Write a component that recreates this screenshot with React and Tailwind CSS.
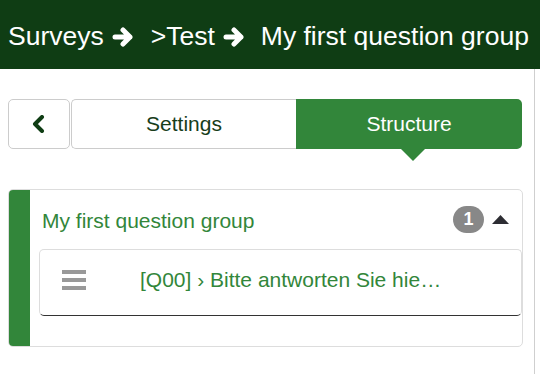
import React from "react";

const Arrow = () => (
  <svg width="23" height="20" viewBox="0 0 23 20" className="shrink-0">
    <path d="M3 10h15M11 3l7 7-7 7" fill="none" stroke="#fff" strokeWidth="5" strokeLinecap="round" strokeLinejoin="round" />
  </svg>
);

export default function App() {
  return (
    <div className="w-[540px] h-[374px] bg-white overflow-hidden font-['Liberation_Sans',Arial,sans-serif]">
      {/* breadcrumb header */}
      <div className="h-[69px] bg-[#0f3d14] flex items-center pl-2 pt-[4px] text-white text-[26.5px] whitespace-nowrap">
        <span>Surveys</span>
        <span className="ml-[8px] mr-[16px]"><Arrow /></span>
        <span>&gt;Test</span>
        <span className="ml-[8px] mr-[15px]"><Arrow /></span>
        <span>My first question group</span>
      </div>

      <div className="w-[535px] h-[305px] border-r border-[#cfcfcf] pl-2 pt-[30px]">
        {/* tabs */}
        <div className="flex h-[50px]">
          <button className="w-[62px] h-full border border-[#ccc] rounded-[5px] flex items-center justify-center">
            <svg width="14" height="18" viewBox="0 0 14 18">
              <path d="M10 2L3 9l7 7" fill="none" stroke="#0f3d14" strokeWidth="4" strokeLinecap="round" strokeLinejoin="round" />
            </svg>
          </button>
          <button className="ml-[1px] w-[225px] h-full border border-[#ccc] border-r-0 rounded-l-[5px] text-[21px] text-[#173d1a]">
            Settings
          </button>
          <button className="relative w-[226px] h-full bg-[#32863a] rounded-r-[5px] text-[21px] text-white">
            Structure
            <span className="absolute top-full left-[105px] w-0 h-0 border-l-[12px] border-r-[12px] border-t-[12px] border-l-transparent border-r-transparent border-t-[#32863a]" />
          </button>
        </div>

        {/* question group panel */}
        <div className="mt-[40px] w-[515px] h-[158px] border border-[#ddd] rounded-[5px] flex overflow-hidden">
          <div className="w-[21px] bg-[#32863a] shrink-0" />
          <div className="flex-1 pl-[9px] pt-[17px]">
            <div className="flex items-center h-[27px] pl-[3px] pr-[13px]">
              <span className="text-[21px] text-[#32863a] flex-1">My first question group</span>
              <span className="w-[31px] h-[27px] mb-[3px] rounded-full bg-[#888] text-white font-bold text-[18px] flex items-center justify-center">1</span>
              <svg width="17" height="9" viewBox="0 0 17 9" className="ml-[8px] mt-[-2px]">
                <path d="M0 9L8.5 0 17 9z" fill="#2d2d33" />
              </svg>
            </div>
            <div className="mt-[15px] h-[67px] border border-[#ddd] border-b-[#333] rounded-[5px] flex items-center pb-[5px]">
              <svg width="24" height="20" viewBox="0 0 24 20" className="ml-[22px]">
                <rect x="0" y="0" width="24" height="4" fill="#999" />
                <rect x="0" y="8" width="24" height="4" fill="#999" />
                <rect x="0" y="16" width="24" height="4" fill="#999" />
              </svg>
              <span className="ml-[54px] text-[21px] text-[#32863a] whitespace-nowrap">[Q00] › Bitte antworten Sie hie…</span>
            </div>
          </div>
        </div>
      </div>
    </div>
  );
}
